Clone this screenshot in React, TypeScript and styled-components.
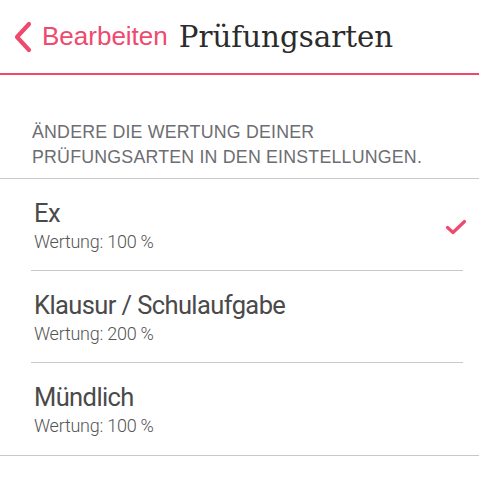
import React from 'react';
import styled, { createGlobalStyle } from 'styled-components';

const GlobalStyle = createGlobalStyle`
  body {
    margin: 0;
    background: #ffffff;
    font-family: 'Liberation Sans', Arial, sans-serif;
  }
`;

const Page = styled.div`
  width: 479px;
  height: 480px;
  background: #ffffff;
  overflow: hidden;
`;

const NavBar = styled.div`
  height: 75px;
  display: flex;
  align-items: center;
  border-bottom: 2px solid #f0476e;
  box-sizing: border-box;
  padding-left: 12px;
`;

const BackLink = styled.div`
  display: flex;
  align-items: center;
  color: #ee4a6d;
  font-family: 'Liberation Sans', Arial, sans-serif;
  font-size: 26px;
  svg {
    margin-right: 8px;
  }
`;

const NavTitle = styled.div`
  margin-left: 11px;
  font-family: 'DejaVu Serif', 'Liberation Serif', serif;
  font-size: 29.3px;
  color: #2b2b2b;
`;

const SectionHeader = styled.div`
  padding: 45px 0 8px 32px;
  color: #6d6d72;
  font-size: 17.8px;
  line-height: 25px;
  letter-spacing: 0.2px;
  border-bottom: 1px solid #c8c7cc;
`;

const List = styled.div`
  border-bottom: 1px solid #c8c7cc;
`;

const Row = styled.div<{ $last?: boolean }>`
  box-sizing: border-box;
  margin-left: 31px;
  margin-right: ${(p) => (p.$last ? '0' : '16px')};
  height: 92px;
  display: flex;
  align-items: center;
  justify-content: space-between;
  border-bottom: ${(p) => (p.$last ? 'none' : '1px solid #c8c7cc')};
`;

const RowText = styled.div`
  padding-left: 3px;
  padding-top: 1px;
  font-family: 'Roboto', 'Open Sans', sans-serif;
  color: #4a4a4a;
`;

const Title = styled.div`
  font-size: 25.5px;
  font-weight: 400;
  line-height: 32px;
  letter-spacing: -0.6px;
`;

const Subtitle = styled.div`
  font-size: 18px;
  font-weight: 300;
  line-height: 25px;
  letter-spacing: -0.25px;
  color: #555555;
`;

const Check = styled.svg`
  margin-right: -4px;
  margin-top: 4px;
`;

const types = [
  { name: 'Ex', weight: 100, checked: true },
  { name: 'Klausur / Schulaufgabe', weight: 200, checked: false },
  { name: 'Mündlich', weight: 100, checked: false },
];

function App() {
  return (
    <Page>
      <GlobalStyle />
      <NavBar>
        <BackLink>
          <svg width="22" height="34" viewBox="0 0 22 34">
            <path d="M17 4 L5 17 L17 30" fill="none" stroke="#ee4a6d" strokeWidth="4.2" strokeLinecap="round" strokeLinejoin="round" />
          </svg>
          Bearbeiten
        </BackLink>
        <NavTitle>Prüfungsarten</NavTitle>
      </NavBar>
      <SectionHeader>
        ÄNDERE DIE WERTUNG DEINER
        <br />
        PRÜFUNGSARTEN IN DEN EINSTELLUNGEN.
      </SectionHeader>
      <List>
        {types.map((t, i) => (
          <Row key={t.name} $last={i === types.length - 1}>
            <RowText>
              <Title>{t.name}</Title>
              <Subtitle>Wertung: {t.weight} %</Subtitle>
            </RowText>
            {t.checked && (
              <Check width="22" height="18" viewBox="0 0 22 18">
                <path d="M2.5 9.5 L8 14.5 L19.5 3.5" fill="none" stroke="#ee4a6d" strokeWidth="3.2" strokeLinecap="round" strokeLinejoin="round" />
              </Check>
            )}
          </Row>
        ))}
      </List>
    </Page>
  );
}

export default App;
